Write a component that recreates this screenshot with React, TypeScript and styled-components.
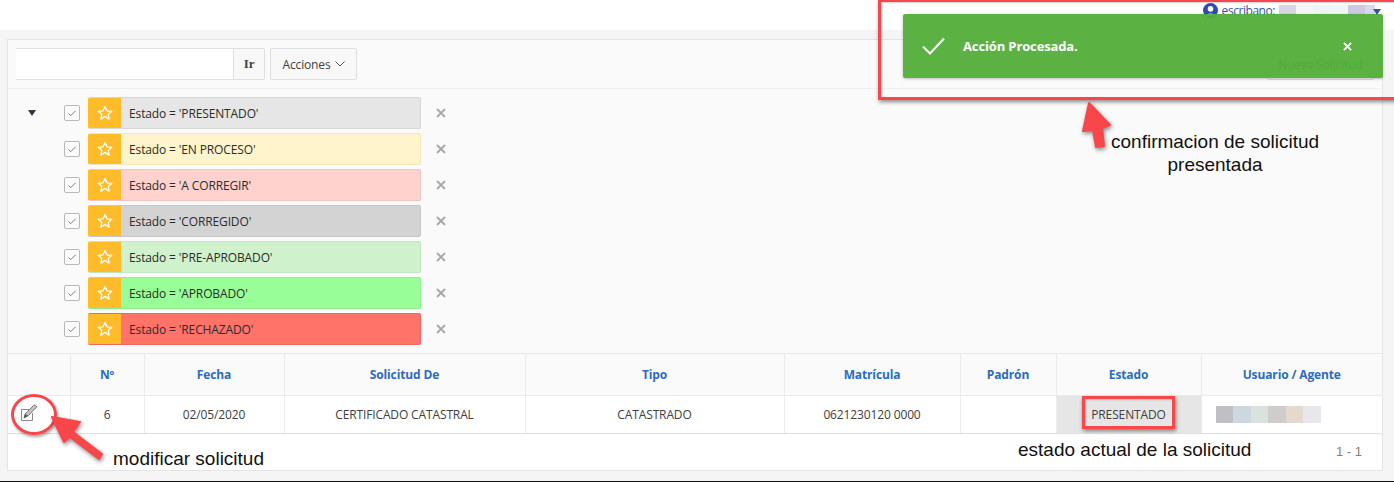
import React from "react";
import styled, { createGlobalStyle } from "styled-components";

const GlobalStyle = createGlobalStyle`
    html, body {
        margin: 0;
        padding: 0;
        background: #f5f5f5;
    }
    * {
        box-sizing: border-box;
    }
`;

const Page = styled.div`
    position: relative;
    width: 1394px;
    height: 482px;
    overflow: hidden;
    background: #f5f5f5;
    border-bottom: 1px solid #111;
    font-family: "Open Sans", "Liberation Sans", sans-serif;
    font-size: 12px;
    letter-spacing: -0.13px;
    color: #404040;
`;

const Header = styled.div`
    display: flex;
    justify-content: flex-end;
    height: 30px;
    padding: 3px 13px 0 0;
    background: #fff;
`;

const UserMenu = styled.div`
    display: flex;
    align-items: flex-start;
    gap: 4px;
    font-size: 12px;
    letter-spacing: -0.45px;
    line-height: 16px;
    color: #3a50a8;
`;

const BlurredName = styled.span`
    display: inline-block;
    width: 96px;
    height: 11px;
    margin: 2px -6px 0 0;
    background: linear-gradient(
        90deg,
        #d9d4e6 0 18%,
        #f6f6fa 18% 35%,
        #f0f4f8 35% 54%,
        #f0f6f6 54% 72%,
        #cfc8e0 72% 90%,
        #dcd6ec 90% 100%
    );
`;

const UserCaret = styled.span`
    width: 0;
    height: 0;
    margin-top: 6px;
    border-left: 4px solid transparent;
    border-right: 4px solid transparent;
    border-top: 6px solid #3a50a8;
`;

const Region = styled.div`
    display: flex;
    flex-direction: column;
    width: 1376px;
    height: 432px;
    margin: 9px 0 0 7px;
    background: #fff;
    border: 1px solid #e4e4e4;
`;

const Toolbar = styled.div`
    display: flex;
    align-items: center;
    flex: none;
    height: 49px;
    padding: 0 8px 0 8px;
    background: #fafafa;
    border-bottom: 1px solid #f0f0f0;
`;

const SearchInput = styled.div`
    width: 217px;
    height: 32px;
    background: #fff;
    border: 1px solid #dfdfdf;
    border-left: none;
    border-right: none;
`;

const ToolButton = styled.button<{ $wide?: boolean; $bold?: boolean }>`
    display: flex;
    align-items: center;
    justify-content: center;
    gap: 4px;
    width: ${(p) => (p.$wide ? "87px" : "32px")};
    height: 32px;
    margin-left: ${(p) => (p.$wide ? "5px" : "0")};
    padding: 0;
    background: #f8f8f8;
    border: 1px solid #dfdfdf;
    border-radius: ${(p) => (p.$wide ? "2px" : "0 2px 2px 0")};
    font-family: ${(p) => (p.$bold ? '"Liberation Serif", serif' : '"Open Sans", sans-serif')};
    font-size: ${(p) => (p.$bold ? "13px" : "12px")};
    font-weight: ${(p) => (p.$bold ? 700 : 400)};
    letter-spacing: -0.13px;
    color: #404040;
`;

const NewButton = styled.button`
    width: 107px;
    height: 32px;
    margin-left: auto;
    padding: 0;
    background: #f8f8f8;
    border: 1px solid #dfdfdf;
    border-radius: 2px;
    font-family: "Open Sans", sans-serif;
    font-size: 12px;
    letter-spacing: -0.13px;
    color: #404040;
`;

const FilterArea = styled.div`
    display: flex;
    flex: 1;
    padding: 8px 0 0 20px;
    background: #fafafa;
    border-bottom: 1px solid #e8e8e8;
`;

const Caret = styled.div`
    width: 0;
    height: 0;
    margin-top: 13px;
    border-left: 4px solid transparent;
    border-right: 4px solid transparent;
    border-top: 6px solid #2b3a4a;
`;

const FilterList = styled.div`
    display: flex;
    flex-direction: column;
    gap: 4px;
    margin-left: 28px;
`;

const FilterRow = styled.div`
    display: flex;
    align-items: center;
    height: 32px;
`;

const Check = styled.span`
    display: flex;
    align-items: center;
    justify-content: center;
    width: 16px;
    height: 16px;
    margin-right: 8px;
    background: #fbfbfb;
    border: 1px solid #b8b8b8;
    border-radius: 2px;
`;

const Pill = styled.div<{ $bg: string; $line: string }>`
    display: flex;
    width: 333px;
    height: 32px;
    border-radius: 2px;
    overflow: hidden;
    background: ${(p) => p.$bg};
    border: 1px solid ${(p) => p.$line};
    border-left: none;
`;

const StarBox = styled.span`
    display: flex;
    align-items: center;
    justify-content: center;
    flex: none;
    width: 33px;
    background: #febc2a;
`;

const PillLabel = styled.span`
    padding-left: 8px;
    line-height: 31px;
    font-size: 12px;
    color: #2c2c2c;
`;

const Remove = styled.span`
    display: flex;
    align-items: center;
    justify-content: center;
    width: 40px;
`;

const Grid = styled.table`
    flex: none;
    width: 1374px;
    border-collapse: collapse;
    table-layout: fixed;
`;

const HeadCell = styled.th`
    height: 42px;
    padding: 0;
    background: #fafafa;
    border-right: 1px solid #ebebeb;
    border-bottom: 1px solid #ebebeb;
    font-size: 12px;
    font-weight: 700;
    color: #2a6cc0;
    &:last-child {
        border-right: none;
    }
`;

const BodyCell = styled.td<{ $bg?: string; $icon?: boolean }>`
    height: 38px;
    padding: ${(p) => (p.$icon ? "0 0 0 12px" : "0")};
    background: ${(p) => p.$bg || "#fff"};
    border-right: 1px solid #ebebeb;
    border-bottom: 1px solid #e0e0e0;
    text-align: ${(p) => (p.$icon ? "left" : "center")};
    font-size: 12px;
    color: #404040;
    &:last-child {
        border-right: none;
    }
`;

const BlurStrip = styled.div`
    display: flex;
    align-items: center;
    padding-left: 14px;
`;

const BlurBlock = styled.span<{ $c: string }>`
    width: 17.5px;
    height: 17px;
    background: ${(p) => p.$c};
`;

const Footer = styled.div`
    display: flex;
    justify-content: flex-end;
    flex: none;
    height: 36px;
    padding: 10px 20px 0 0;
    font-family: "Liberation Sans", sans-serif;
    font-size: 13px;
    letter-spacing: 0;
    color: #8a7f68;
`;

const Toast = styled.div`
    position: absolute;
    top: 14px;
    left: 903px;
    display: flex;
    align-items: center;
    width: 480px;
    height: 64px;
    padding: 0 31px 0 19px;
    background: rgba(82, 174, 56, 0.95);
    border-radius: 2px;
    box-shadow: 0 1px 3px rgba(0, 0, 0, 0.25);
    color: #fff;
    font-size: 13px;
    font-weight: 700;
`;

const ToastText = styled.span`
    flex: 1;
    margin-left: 18px;
`;

const RedFrame = styled.div<{ $left: number; $top: number; $w: number; $h: number }>`
    position: absolute;
    left: ${(p) => p.$left}px;
    top: ${(p) => p.$top}px;
    width: ${(p) => p.$w}px;
    height: ${(p) => p.$h}px;
    border: 3px solid #f7474b;
    box-shadow: 1px 2px 4px rgba(0, 0, 0, 0.45), inset 1px 1px 2px rgba(0, 0, 0, 0.2);
`;

const RedCircle = styled.div`
    position: absolute;
    left: 11px;
    top: 394px;
    width: 46px;
    height: 41px;
    border: 3px solid #f7474b;
    border-radius: 50%;
    box-shadow: 1px 2px 3px rgba(0, 0, 0, 0.35);
`;

const Note = styled.div<{ $left: number; $top: number; $center?: boolean }>`
    position: absolute;
    left: ${(p) => p.$left}px;
    top: ${(p) => p.$top}px;
    font-family: "Liberation Sans", Arial, sans-serif;
    font-size: 19px;
    line-height: 23px;
    letter-spacing: 0;
    color: #111;
    white-space: nowrap;
    text-align: ${(p) => (p.$center ? "center" : "left")};
`;

const ArrowSvg = styled.svg<{ $left: number; $top: number }>`
    position: absolute;
    left: ${(p) => p.$left}px;
    top: ${(p) => p.$top}px;
    overflow: visible;
    filter: drop-shadow(1px 2px 2px rgba(0, 0, 0, 0.45));
`;

const filters = [
    { label: "Estado = 'PRESENTADO'", bg: "#e6e6e6", line: "#d8d8d8" },
    { label: "Estado = 'EN PROCESO'", bg: "#fff4cc", line: "#f1e6bc" },
    { label: "Estado = 'A CORREGIR'", bg: "#ffd2ce", line: "#f2c4c0" },
    { label: "Estado = 'CORREGIDO'", bg: "#d3d3d3", line: "#c8c8c8" },
    { label: "Estado = 'PRE-APROBADO'", bg: "#cff2cc", line: "#c2e6bf" },
    { label: "Estado = 'APROBADO'", bg: "#98ff98", line: "#8df08d" },
    { label: "Estado = 'RECHAZADO'", bg: "#ff7368", line: "#f0685e" },
];

const columns = [
    { title: "", width: 62 },
    { title: "Nº", width: 74 },
    { title: "Fecha", width: 140 },
    { title: "Solicitud De", width: 241 },
    { title: "Tipo", width: 259 },
    { title: "Matrícula", width: 176 },
    { title: "Padrón", width: 96 },
    { title: "Estado", width: 145 },
    { title: "Usuario / Agente", width: 181 },
];

const blur = ["#c0c0c4", "#ced6e0", "#d9e2dd", "#cfcdcc", "#e4d9cc", "#e8e8ec"];

const StarIcon = () => (
    <svg width="16" height="16" viewBox="0 0 16 16">
        <path
            d="M8 1.4l2 4.4 4.8.5-3.6 3.2 1 4.7L8 11.4l-4.2 2.8 1-4.7L1.2 6.3 6 5.8z"
            fill="none"
            stroke="#fff"
            strokeWidth="1.3"
            strokeLinejoin="round"
        />
    </svg>
);

const TickIcon = () => (
    <svg width="10" height="10" viewBox="0 0 10 10">
        <path d="M1.5 5.5l2.2 2.2 5-5" fill="none" stroke="#777" strokeWidth="1" />
    </svg>
);

const CrossIcon = ({ color = "#a8a8a8", size = 10, weight = 1.8 }) => (
    <svg width={size} height={size} viewBox="0 0 10 10">
        <path d="M1 1l8 8M9 1l-8 8" stroke={color} strokeWidth={weight} fill="none" />
    </svg>
);

// pencil over a square, lower left to upper right
const EditIcon = () => (
    <svg width="18" height="18" viewBox="0 0 18 18">
        <path d="M9 5.5H1.5v11h11V9" fill="none" stroke="#8a8a8a" strokeWidth="1" />
        <path d="M4 14l1.2-4L14 1.2c1-.6 2.2.6 2.8 1.6L8 11.8z" fill="#c8c8c8" stroke="#6a6a6a" strokeWidth="1" strokeLinejoin="round" />
        <path d="M4 14l1.2-4 2.8 1.8z" fill="#555" />
    </svg>
);

const App = () => {
    return (
        <>
            <GlobalStyle />
            <Page>
                <Header>
                    <UserMenu>
                        <svg width="15" height="15" viewBox="0 0 14 14">
                            <circle cx="7" cy="7" r="7" fill="#2f48b8" />
                            <circle cx="7" cy="5.5" r="2.6" fill="#fff" />
                            <path d="M2.5 12c.8-3 8.2-3 9 0z" fill="#fff" />
                        </svg>
                        escribano:
                        <BlurredName />
                        <UserCaret />
                    </UserMenu>
                </Header>
                <Region>
                    <Toolbar>
                        <SearchInput />
                        <ToolButton $bold>Ir</ToolButton>
                        <ToolButton $wide>
                            Acciones
                            <svg width="10" height="6" viewBox="0 0 10 6">
                                <path d="M.5.5L5 5 9.5.5" fill="none" stroke="#555" strokeWidth="1" />
                            </svg>
                        </ToolButton>
                        <NewButton>Nueva Solicitud</NewButton>
                    </Toolbar>
                    <FilterArea>
                        <Caret />
                        <FilterList>
                            {filters.map((f) => (
                                <FilterRow key={f.label}>
                                    <Check>
                                        <TickIcon />
                                    </Check>
                                    <Pill $bg={f.bg} $line={f.line}>
                                        <StarBox>
                                            <StarIcon />
                                        </StarBox>
                                        <PillLabel>{f.label}</PillLabel>
                                    </Pill>
                                    <Remove>
                                        <CrossIcon />
                                    </Remove>
                                </FilterRow>
                            ))}
                        </FilterList>
                    </FilterArea>
                    <Grid>
                        <colgroup>
                            {columns.map((c) => (
                                <col key={c.title} width={c.width} />
                            ))}
                        </colgroup>
                        <thead>
                            <tr>
                                {columns.map((c) => (
                                    <HeadCell key={c.title}>{c.title}</HeadCell>
                                ))}
                            </tr>
                        </thead>
                        <tbody>
                            <tr>
                                <BodyCell $icon>
                                    <EditIcon />
                                </BodyCell>
                                <BodyCell>6</BodyCell>
                                <BodyCell>02/05/2020</BodyCell>
                                <BodyCell>CERTIFICADO CATASTRAL</BodyCell>
                                <BodyCell>CATASTRADO</BodyCell>
                                <BodyCell>0621230120 0000</BodyCell>
                                <BodyCell />
                                <BodyCell $bg="#e6e6e6">PRESENTADO</BodyCell>
                                <BodyCell>
                                    <BlurStrip>
                                        {blur.map((c) => (
                                            <BlurBlock key={c} $c={c} />
                                        ))}
                                    </BlurStrip>
                                </BodyCell>
                            </tr>
                        </tbody>
                    </Grid>
                    <Footer>1 - 1</Footer>
                </Region>

                <Toast>
                    <svg width="23" height="18" viewBox="0 0 23 18">
                        <path d="M1 9.5l7 7L22 1.5" fill="none" stroke="#fff" strokeWidth="2" />
                    </svg>
                    <ToastText>Acción Procesada.</ToastText>
                    <CrossIcon color="#fff" size={9} weight={2} />
                </Toast>

                <RedFrame $left={878} $top={-1} $w={522} $h={101} />
                <RedFrame $left={1082} $top={396} $w={93} $h={33} />
                <RedCircle />

                <ArrowSvg $left={1080} $top={98} width="34" height="55" viewBox="0 0 34 55">
                    <path d="M9 5L30 27 22 30 24 48 16 49 13 32 3 33z" fill="#f7474b" stroke="#f7474b" strokeLinejoin="round" strokeWidth="2" />
                </ArrowSvg>
                <ArrowSvg $left={50} $top={412} width="56" height="50" viewBox="0 0 56 50">
                    <path d="M2 5L30 10 23 20 52 42 49 47 20 25 14 30z" fill="#f7474b" stroke="#f7474b" strokeLinejoin="round" strokeWidth="2" />
                </ArrowSvg>

                <Note $left={1111} $top={130} $center>
                    confirmacion de solicitud
                    <br />
                    presentada
                </Note>
                <Note $left={113} $top={447}>modificar solicitud</Note>
                <Note $left={1018} $top={438}>estado actual de la solicitud</Note>
            </Page>
        </>
    );
};

export default App;
